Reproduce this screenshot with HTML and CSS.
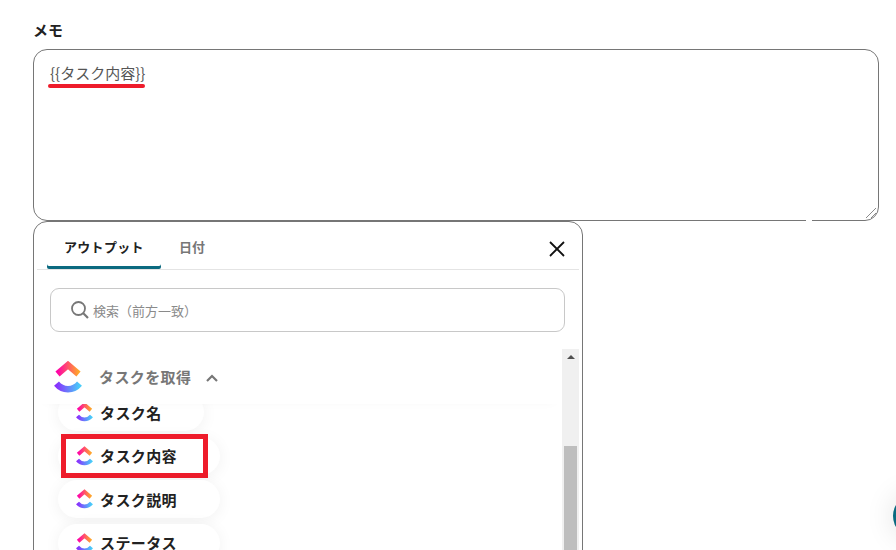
FILE: index.html
```html
<!DOCTYPE html>
<html lang="ja">
<head>
<meta charset="utf-8">
<title>メモ</title>
<link rel="stylesheet" href="styles.css">
</head>
<body>
<svg class="defs" width="0" height="0" aria-hidden="true">
  <defs>
    <linearGradient id="g-top" x1="0" y1="0" x2="1" y2="0">
      <stop offset="0" stop-color="#ff02a8"/>
      <stop offset="1" stop-color="#ffa62b"/>
    </linearGradient>
    <linearGradient id="g-bottom" x1="0" y1="0" x2="1" y2="0">
      <stop offset="0" stop-color="#8930fd"/>
      <stop offset="1" stop-color="#49ccf9"/>
    </linearGradient>
    <symbol id="clickup" viewBox="0 0 28 32">
      <path d="M3.500 13 14 4l10.500 9" fill="none" stroke="url(#g-top)" stroke-width="6.400" stroke-linejoin="miter"/>
      <path d="M2.500 22.600c3 3.600 6.800 5.600 11.500 5.600s8.500-2 11.500-5.600" fill="none" stroke="url(#g-bottom)" stroke-width="6.400"/>
    </symbol>
  </defs>
</svg>
<main class="page">
  <div class="field-label">メモ</div>
  <div class="memo">
    <span class="memo-token">{{タスク内容}}</span>
    <svg class="resizer" width="12" height="12" viewBox="0 0 12 12" aria-hidden="true">
      <path d="M1 11 11 1M6 11l5-5" stroke="#8a8a8a" stroke-width="1" fill="none"/>
    </svg>
    <i class="border-gap"></i>
  </div>
  <section class="panel">
    <header class="tabs">
      <div class="tab tab-active">アウトプット</div>
      <div class="tab">日付</div>
      <svg class="close" width="18" height="18" viewBox="0 0 18 18" aria-hidden="true">
        <path d="M2 2l14 14M16 2 2 16" stroke="#111" stroke-width="1.800" fill="none"/>
      </svg>
    </header>
    <div class="search">
      <svg width="20" height="20" viewBox="0 0 20 20" aria-hidden="true">
        <circle cx="8.500" cy="8.500" r="6.500" fill="none" stroke="#777" stroke-width="1.800"/>
        <path d="M13.300 13.300 18 18" stroke="#777" stroke-width="2.200" fill="none"/>
      </svg>
      <span class="search-text">検索（前方一致）</span>
    </div>
    <div class="list-area">
      <div class="list">
        <div class="group-head">
          <svg class="logo-large" aria-hidden="true"><use href="#clickup"/></svg>
          <span class="group-title">タスクを取得</span>
          <svg class="chevron" width="14" height="9" viewBox="0 0 14 9" aria-hidden="true">
            <path d="M2 7l5-5 5 5" fill="none" stroke="#777" stroke-width="2.200"/>
          </svg>
        </div>
        <div class="pills">
          <div class="pill pill-first"><svg class="logo-small" aria-hidden="true"><use href="#clickup"/></svg>タスク名</div>
          <div class="pill"><svg class="logo-small" aria-hidden="true"><use href="#clickup"/></svg>タスク内容<i class="mark"></i></div>
          <div class="pill"><svg class="logo-small" aria-hidden="true"><use href="#clickup"/></svg>タスク説明</div>
          <div class="pill"><svg class="logo-small" aria-hidden="true"><use href="#clickup"/></svg>ステータス</div>
        </div>
      </div>
      <div class="scrollbar">
        <div class="scroll-up"></div>
        <div class="scroll-thumb"></div>
      </div>
    </div>
  </section>
</main>
<div class="fab"></div>
</body>
</html>
```
FILE: styles.css
```css
* { box-sizing: border-box; }
html, body {
  margin: 0;
  height: 550px;
  overflow: hidden;
  background: #fff;
}
body {
  position: relative;
  font-family: "Noto Sans CJK JP", "Noto Sans", sans-serif;
  color: #222;
}
.defs { position: absolute; }
.page {
  height: 550px;
  overflow: hidden;
  padding: 20px 17px 0 33px;
}
.field-label {
  font-size: 15px;
  font-weight: 700;
  line-height: 20px;
  height: 29px;
  color: #222;
}
.memo {
  position: relative;
  height: 172px;
  border: 1px solid #767676;
  border-radius: 14px;
  padding: 13px 16px;
  font-size: 15px;
  line-height: 20px;
  color: #555;
}
.memo-token {
  position: relative;
  display: inline-block;
}
.memo-token::after {
  content: "";
  position: absolute;
  left: -2px;
  right: 0;
  top: 21px;
  height: 4px;
  border-radius: 2px;
  background: #ee1c2b;
}
.resizer {
  position: absolute;
  right: 1px;
  bottom: 1px;
}
.border-gap {
  position: absolute;
  left: 772px;
  bottom: -2px;
  width: 6px;
  height: 3px;
  background: #fff;
}
.panel {
  width: 550px;
  height: 400px;
  border: 1px solid #767676;
  border-radius: 14px;
  padding: 0 3px;
}
.tabs {
  position: relative;
  display: flex;
  height: 48px;
  padding-left: 10px;
  border-bottom: 1px solid #e4e4e4;
}
.tab {
  font-size: 13px;
  font-weight: 700;
  line-height: 50px;
  color: #777;
  padding: 0 17px 0 18px;
  white-space: nowrap;
}
.tab-active {
  width: 114px;
  padding: 0 0 0 17px;
  color: #222;
  letter-spacing: 0.300px;
  box-shadow: inset 0 -3px 0 #0b6a80;
  border-radius: 0 0 2px 2px;
}
.close {
  position: absolute;
  right: 13px;
  top: 18px;
}
.search {
  display: flex;
  align-items: center;
  gap: 3px;
  height: 44px;
  margin: 18px 14px 0 13px;
  padding-left: 19px;
  border: 1px solid #c8c8c8;
  border-radius: 9px;
}
.search-text {
  font-size: 13px;
  color: #8a8a8a;
}
.list-area {
  display: flex;
  height: 300px;
  margin-top: 17px;
}
.list {
  flex: 1;
  min-width: 0;
}
.group-head {
  position: relative;
  z-index: 1;
  display: flex;
  align-items: center;
  height: 55px;
  padding: 0 0 0 17px;
  background: #fff;
  box-shadow: 0 6px 10px -8px rgba(0, 0, 0, 0.04);
}
.logo-large {
  width: 28px;
  height: 32px;
}
.group-title {
  margin-left: 17px;
  font-size: 15px;
  font-weight: 700;
  letter-spacing: 0.400px;
  color: #777;
}
.chevron {
  margin-left: 14px;
  margin-top: 3px;
}
.pills {
  display: flex;
  flex-direction: column;
  align-items: flex-start;
  gap: 5.500px;
  padding-left: 21px;
  margin-top: -11px;
}
.pill {
  position: relative;
  display: flex;
  align-items: center;
  gap: 7px;
  width: 162px;
  height: 38px;
  padding-left: 18px;
  border-radius: 19px;
  background: #fff;
  box-shadow: 0 2px 16px rgba(0, 0, 0, 0.06);
  font-size: 15px;
  font-weight: 700;
  letter-spacing: 0.400px;
  color: #222;
}
.pill-first {
  width: 146px;
}
.logo-small {
  width: 17px;
  height: 20px;
  flex: none;
}
.mark {
  position: absolute;
  left: 3px;
  top: -3px;
  width: 147px;
  height: 44px;
  border: 5px solid #ee1c2b;
}
.scrollbar {
  position: relative;
  flex: none;
  width: 17px;
  background: #f0f0f0;
}
.scroll-up {
  position: absolute;
  left: 5px;
  top: 6px;
  width: 0;
  height: 0;
  border-left: 4px solid transparent;
  border-right: 4px solid transparent;
  border-bottom: 4px solid #505050;
}
.scroll-thumb {
  position: absolute;
  left: 2px;
  top: 97px;
  width: 13px;
  height: 200px;
  background: #bebebe;
}
.fab {
  position: absolute;
  left: 893px;
  top: 494px;
  width: 44px;
  height: 44px;
  border-radius: 50%;
  background: #0b6a80;
  box-shadow: 0 0 30px rgba(0, 0, 0, 0.12);
}
```
